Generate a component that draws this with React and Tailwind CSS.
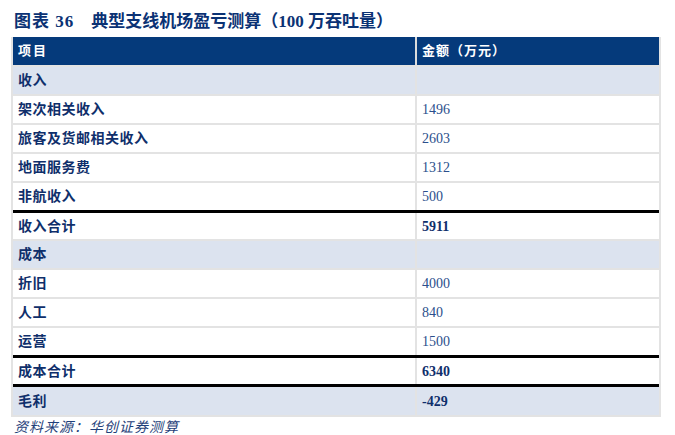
import React from "react";

const rows = [
  { label: "收入", value: "", type: "section" },
  { label: "架次相关收入", value: "1496" },
  { label: "旅客及货邮相关收入", value: "2603" },
  { label: "地面服务费", value: "1312" },
  { label: "非航收入", value: "500" },
  { label: "收入合计", value: "5911", type: "total" },
  { label: "成本", value: "", type: "section" },
  { label: "折旧", value: "4000" },
  { label: "人工", value: "840" },
  { label: "运营", value: "1500" },
  { label: "成本合计", value: "6340", type: "total" },
  { label: "毛利", value: "-429", type: "final" },
];

const cjk = { fontFamily: '"Liberation Serif", "Noto Sans CJK SC", serif' };

export default function App() {
  return (
    <div className="w-[675px] h-[435px] bg-white overflow-hidden" style={cjk}>
      <div className="pl-[14px] pt-[10px] h-[37px] text-[17px] font-bold text-[#0b3274] leading-[23px] flex">
        <span className="tracking-[1px]">图表 36</span>
        <span className="ml-[17px]">典型支线机场盈亏测算（100 万吞吐量）</span>
      </div>
      <div className="ml-[11px] w-[650px] border-x-2 border-b-2 border-[#e3e3e3]">
        <div className="flex h-[28px] bg-[#053a7b] text-white text-[13px] font-bold">
          <div className="w-[402px] pl-[5px] flex items-center tracking-[2px]">项目</div>
          <div className="w-[2px] bg-[#dcdcdc]" />
          <div className="flex-1 pl-[5px] flex items-center tracking-[1px]">金额（万元）</div>
        </div>
        {rows.map((r, i) => {
          const shaded = r.type === "section" || r.type === "final";
          const bold = r.type === "total" || r.type === "final";
          const thickTop = r.type === "total" || r.type === "final";
          return (
            <div
              key={i}
              className={
                "flex text-[14px] " +
                (r.type === "final" ? "h-[31px] " : "h-[29px] ") +
                (shaded ? "bg-[#dce3ef] " : "bg-white ") +
                (thickTop ? "border-t-[3px] border-black " : "border-t-2 border-[#e3e3e3] ")
              }
            >
              <div className="w-[402px] pl-[5px] flex items-center text-[#0f2f6b] font-bold tracking-[0.5px]">{r.label}</div>
              <div className="w-[2px] bg-[#e3e3e3]" />
              <div
                className={
                  "flex-1 pl-[5px] flex items-center text-[14px] " +
                  (bold ? "font-bold text-[#0f2f6b]" : "text-[#2b4f8c]")
                }
              >
                {r.value}
              </div>
            </div>
          );
        })}
      </div>
      <div className="pl-[14px] pt-[3px] text-[14px] leading-[16px] italic text-[#1f3f7a] tracking-[1px]">资料来源：华创证券测算</div>
    </div>
  );
}
